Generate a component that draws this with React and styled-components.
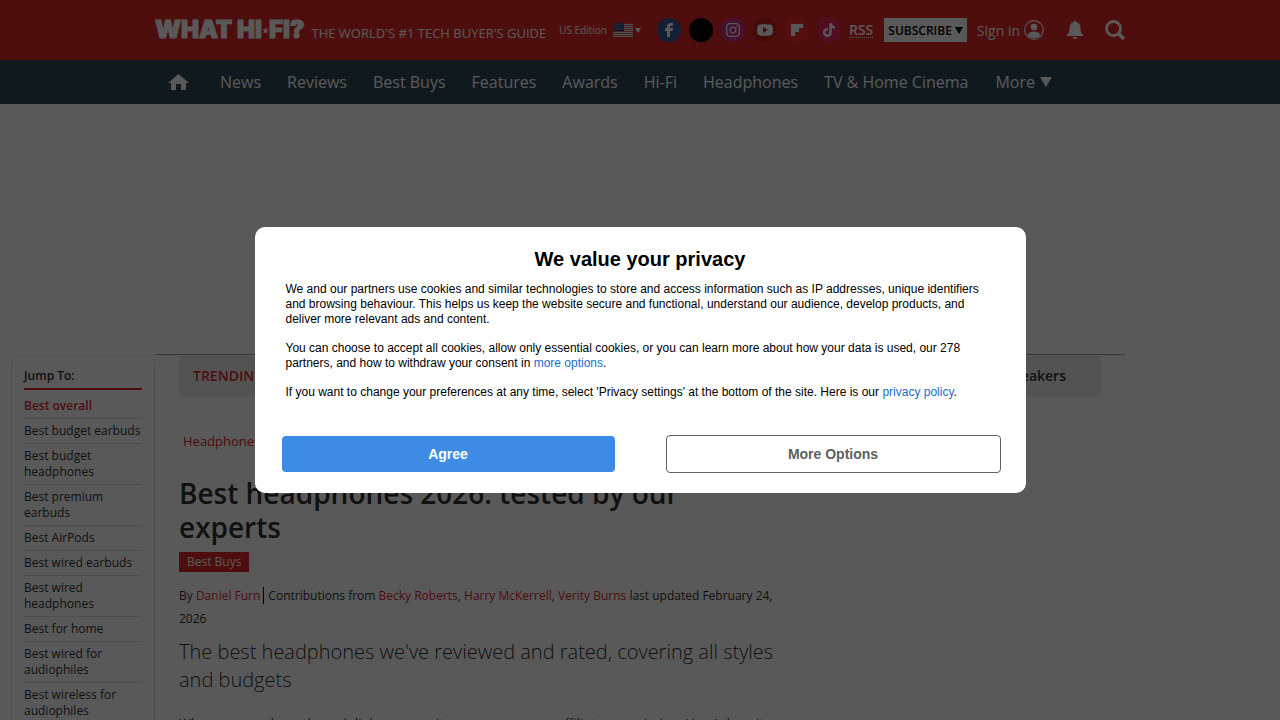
import React from "react";
import styled, { createGlobalStyle } from "styled-components";
import { FaInstagram, FaTiktok } from "react-icons/fa";

const SOCIALS = [
	{ name: "Facebook", color: "#3b5998", size: 14, Icon: FacebookMark },
	{ name: "X", color: "#000000", size: 15 },
	{ name: "Instagram", color: "#c8308c", size: 16, Icon: FaInstagram },
	{ name: "YouTube", color: "#c42222", size: 16, Icon: YoutubeMark },
	{ name: "Flipboard", color: "#f52c2c", size: 12, Icon: FlipboardMark },
	{ name: "TikTok", color: "#e62a64", size: 14, Icon: FaTiktok }
];

const NAV = [
	"News",
	"Reviews",
	"Best Buys",
	"Features",
	"Awards",
	"Hi-Fi",
	"Headphones",
	"TV & Home Cinema"
];

const JUMP_LINKS = [
	"Best overall",
	"Best budget earbuds",
	"Best budget headphones",
	"Best premium earbuds",
	"Best AirPods",
	"Best wired earbuds",
	"Best wired headphones",
	"Best for home",
	"Best wired for audiophiles",
	"Best wireless for audiophiles"
];

const TRENDING = ["Best turntables", "Best soundbars", "Best wireless speakers"];

function FacebookMark({ size }) {
	return (
		<svg width={size} height={size} viewBox="0 0 14 14">
			<path
				fill="currentColor"
				d="M5 14V8H3V5h2V3.500C5 1.200 6.300 0 8.400 0H11v2.800H9.300C8.400 2.800 8 3.200 8 4v1h3l-.4 3H8v6z"
			/>
		</svg>
	);
}

function YoutubeMark({ size }) {
	return (
		<svg width={size} height={size} viewBox="0 0 16 16">
			<path
				fill="currentColor"
				fillRule="evenodd"
				d="M3 2.500Q8 2 13 2.500Q15.500 2.700 15.700 5Q16 8 15.700 11Q15.500 13.300 13 13.500Q8 14 3 13.500Q.5 13.300.3 11Q0 8 .3 5Q.5 2.700 3 2.500zM6 5v6l5-3z"
			/>
		</svg>
	);
}

function FlipboardMark({ size }) {
	return (
		<svg width={size} height={size} viewBox="0 0 12 12">
			<path fill="currentColor" d="M0 0h12v4H8v4H4v4H0z" />
		</svg>
	);
}

const Flag = () => (
	<svg width="20" height="14" viewBox="0 0 20 14">
		<rect width="20" height="14" fill="#e8e8e8" />
		<path
			stroke="#d05060"
			d="M0 .5h20M0 2.500h20M0 4.500h20M0 6.500h20M0 8.500h20M0 10.500h20M0 12.500h20"
		/>
		<rect width="11" height="8" fill="#3a4f8c" />
		<path
			stroke="#8090c0"
			strokeDasharray="1 1"
			d="M1 1.500h9M2 3.500h8M1 5.500h9"
		/>
	</svg>
);

const Triangle = ({ width, height }) => (
	<svg width={width} height={height} viewBox="0 0 12 10" preserveAspectRatio="none">
		<path fill="currentColor" d="M0 0h12L6 10z" />
	</svg>
);

const App = () => (
	<>
		<GlobalStyle />
		<Header>
			<Container>
				<Logo href="#">
					WHAT HI
					<svg width="7" height="7" viewBox="0 0 24 24">
						<path
							fill="currentColor"
							d="M12 0l3 8.500h9l-7.200 5.500 2.700 9L12 17.600 4.500 23l2.700-9L0 8.500h9z"
						/>
					</svg>
					FI?
				</Logo>
				<Tagline>THE WORLD'S #1 TECH BUYER'S GUIDE</Tagline>
				<Tools>
					<Edition type="button">
						US Edition
						<Flag />
						<Triangle width={6} height={5} />
					</Edition>
					<Socials>
						{SOCIALS.map(({ name, color, size, Icon }) => (
							<SocialLink key={name} href="#" aria-label={name} $color={color}>
								{Icon && <Icon size={size} />}
							</SocialLink>
						))}
						<Rss href="#">RSS</Rss>
					</Socials>
					<Subscribe type="button">
						SUBSCRIBE
						<Triangle width={8} height={7} />
					</Subscribe>
					<SignIn href="#">
						Sign in
						<svg width="20" height="20" viewBox="0 0 20 20">
							<circle cx="10" cy="10" r="9.300" fill="none" stroke="currentColor" strokeWidth="1.200" />
							<circle cx="10" cy="7" r="3.300" fill="currentColor" />
							<path fill="currentColor" d="M3.800 15.500c.5-3 2.700-4 6.200-4s5.700 1 6.200 4c-3 3.600-9.400 3.600-12.400 0z" />
						</svg>
					</SignIn>
					<IconButton type="button" aria-label="Notifications">
						<svg width="16" height="18" viewBox="0 0 16 18">
							<path
								fill="currentColor"
								d="M8 0c-.9 0-1.400.6-1.500 1.300C3.800 2 2.600 4.200 2.600 7c0 4-1 5.600-2.600 6.800V15h16v-1.200C14.400 12.600 13.400 11 13.400 7c0-2.800-1.200-5-3.900-5.700C9.400.6 8.900 0 8 0zM5.500 16c.3 1.200 1.200 2 2.500 2s2.200-.8 2.500-2z"
							/>
						</svg>
					</IconButton>
					<IconButton type="button" aria-label="Search">
						<svg width="20" height="20" viewBox="0 0 20 20">
							<circle cx="8.500" cy="8.500" r="7" fill="none" stroke="currentColor" strokeWidth="2.800" />
							<path d="M13.500 13.500l5.500 5.500" stroke="currentColor" strokeWidth="3.600" />
						</svg>
					</IconButton>
				</Tools>
			</Container>
		</Header>
		<Nav>
			<Container>
				<HomeLink href="#" aria-label="Home">
					<svg width="21" height="16" viewBox="0 0 21 16">
						<path fill="currentColor" d="M10.500 0L21 9h-3v7h-5v-6H8v6H3V9H0z" />
					</svg>
				</HomeLink>
				{NAV.map(item => (
					<NavLink key={item} href="#">
						{item}
					</NavLink>
				))}
				<MoreButton type="button">
					More
					<Triangle width={12} height={10} />
				</MoreButton>
			</Container>
		</Nav>
		<Page>
			<Sidebar>
				<SidebarTitle>Jump To:</SidebarTitle>
				{JUMP_LINKS.map((item, i) => (
					<JumpLink key={item} href="#" $active={i === 0}>
						{item}
					</JumpLink>
				))}
			</Sidebar>
			<Main>
				<Trending>
					<strong>TRENDING</strong>
					{TRENDING.map(item => (
						<a key={item} href="#">
							{item}
						</a>
					))}
				</Trending>
				<Breadcrumb href="#">Headphones</Breadcrumb>
				<Article>
					<Title>Best headphones 2026: tested by our experts</Title>
					<Tag href="#">Best Buys</Tag>
					<Byline>
						By <a href="#">Daniel Furn</a>
						<Divider />
						Contributions from <a href="#">Becky Roberts</a>,{" "}
						<a href="#">Harry McKerrell</a>, <a href="#">Verity Burns</a> last
						updated February 24, 2026
					</Byline>
					<Standfirst>
						The best headphones we've reviewed and rated, covering all styles and
						budgets
					</Standfirst>
					<Affiliate>
						When you purchase through links on our site, we may earn an affiliate
						commission. Here’s how it works.
					</Affiliate>
				</Article>
			</Main>
		</Page>
		<Overlay>
			<Dialog role="dialog" aria-modal="true" aria-labelledby="privacy-title">
				<DialogTitle id="privacy-title">We value your privacy</DialogTitle>
				<DialogBody>
					<p>
						We and our partners use cookies and similar technologies to store and
						access information such as IP addresses, unique identifiers and
						browsing behaviour. This helps us keep the website secure and
						functional, understand our audience, develop products, and deliver
						more relevant ads and content.
					</p>
					<p>
						You can choose to accept all cookies, allow only essential cookies, or
						you can learn more about how your data is used, our 278 partners, and
						how to withdraw your consent in <a href="#">more options</a>.
					</p>
					<p>
						If you want to change your preferences at any time, select 'Privacy
						settings' at the bottom of the site. Here is our{" "}
						<a href="#">privacy policy</a>.
					</p>
				</DialogBody>
				<Actions>
					<AgreeButton type="button">Agree</AgreeButton>
					<OptionsButton type="button">More Options</OptionsButton>
				</Actions>
			</Dialog>
		</Overlay>
	</>
);

const GlobalStyle = createGlobalStyle`
	* {
		box-sizing: border-box;
	}
	html {
		overflow: hidden;
	}
	body {
		margin: 0;
		background: #fff;
		color: #333;
		font-family: "Open Sans", "Noto Sans", sans-serif;
	}
	a {
		text-decoration: none;
	}
	button {
		font-family: inherit;
		cursor: pointer;
	}
	svg {
		flex: none;
	}
`;

const Header = styled.header`
	background: #e12a2a;
	color: #fff;
`;

const Container = styled.div`
	display: flex;
	align-items: center;
	max-width: 970px;
	margin: 0 auto;
	white-space: nowrap;
`;

const Logo = styled.a`
	display: flex;
	align-items: center;
	color: inherit;
	font-family: Inter, sans-serif;
	font-size: 24px;
	font-weight: 900;
	line-height: 60px;
	-webkit-text-stroke: 1px currentColor;
`;

const Tagline = styled.span`
	margin-left: 7px;
	padding-top: 6px;
	font-size: 13px;
`;

const Tools = styled.div`
	display: flex;
	align-items: center;
	margin-left: auto;
`;

const PlainButton = styled.button`
	display: flex;
	align-items: center;
	padding: 0;
	border: none;
	background: none;
	color: inherit;
`;

const Edition = styled(PlainButton)`
	font-size: 10px;
	svg {
		margin-left: 6px;
	}
	svg + svg {
		margin-left: 2px;
	}
`;

const Socials = styled.div`
	display: flex;
	align-items: center;
	gap: 8px;
	margin: 0 11px 0 16px;
`;

const SocialLink = styled.a`
	display: flex;
	align-items: center;
	justify-content: center;
	width: 24px;
	height: 24px;
	border-radius: 50%;
	background: ${props => props.$color};
	color: #fff;
`;

const Rss = styled.a`
	border-bottom: 1px dotted #fff;
	color: inherit;
	font-size: 14px;
	font-weight: 600;
	line-height: 14px;
`;

const Subscribe = styled(PlainButton)`
	gap: 3px;
	height: 24px;
	padding: 0 4px;
	background: #fff;
	color: #000;
	font-size: 12px;
	font-weight: 600;
`;

const SignIn = styled.a`
	display: flex;
	align-items: center;
	gap: 4px;
	margin: 0 1px 0 10px;
	color: inherit;
	font-size: 14px;
`;

const IconButton = styled(PlainButton)`
	margin-left: 22px;
`;

const Nav = styled.nav`
	background: #304a58;
	color: #fff;
	line-height: 44px;
`;

const HomeLink = styled.a`
	display: flex;
	margin: 0 18px 0 13px;
	color: inherit;
`;

const NavLink = styled.a`
	padding: 0 13px;
	color: inherit;
	font-size: 16px;
`;

const MoreButton = styled(PlainButton)`
	gap: 5px;
	margin-left: 14px;
	font-size: 16px;
`;

const Page = styled.div`
	display: grid;
	grid-template-columns: minmax(155px, 1fr) minmax(0, 970px) minmax(0, 1fr);
	align-items: start;
	padding-top: 250px;
`;

const Sidebar = styled.aside`
	justify-self: end;
	width: 144px;
	margin-top: 1px;
	padding: 12px;
	border: 1px solid #e6e6e6;
	border-radius: 8px;
	font-size: 12px;
	line-height: 16px;
`;

const SidebarTitle = styled.div`
	padding-bottom: 4px;
	border-bottom: 2px solid #e12a2a;
	margin-bottom: 4px;
	font-weight: 600;
`;

const JumpLink = styled.a`
	display: block;
	padding: 4px 0;
	border-bottom: 1px solid #dcdcdc;
	color: ${props => (props.$active ? "#e12a2a" : "#333")};
	font-weight: ${props => (props.$active ? 600 : 400)};
`;

const Main = styled.main`
	padding: 0 24px;
	border-top: 1px solid #999;
`;

const Trending = styled.div`
	display: flex;
	align-items: center;
	justify-content: space-between;
	height: 41px;
	margin-top: 1px;
	padding: 0 35px 2px 14px;
	background: #eee;
	font-size: 14px;
	font-weight: 600;
	strong {
		color: #e12a2a;
		font-weight: 600;
	}
	a {
		color: inherit;
	}
`;

const Breadcrumb = styled.a`
	display: block;
	margin: 34px 0 25px 4px;
	color: #e12a2a;
	font-size: 13px;
	line-height: 20px;
`;

const Article = styled.article`
	max-width: 600px;
`;

const Title = styled.h1`
	margin: 0 0 8px;
	font-size: 28px;
	font-weight: 600;
	line-height: 34px;
`;

const Tag = styled.a`
	display: block;
	width: fit-content;
	padding: 0 8px;
	background: #e12a2a;
	color: #fff;
	font-size: 12px;
	line-height: 20px;
`;

const Byline = styled.p`
	margin: 12px 0 8px;
	font-size: 12px;
	line-height: 23px;
	a {
		color: #e12a2a;
	}
`;

const Divider = styled.span`
	margin: 0 4px 0 3px;
	border-left: 1px solid #000;
`;

const Standfirst = styled.h2`
	margin: 0 0 19px;
	font-size: 20px;
	font-weight: 300;
	line-height: 28px;
`;

const Affiliate = styled.p`
	margin: 0;
	font-size: 13px;
	line-height: 20px;
`;

const Overlay = styled.div`
	position: fixed;
	inset: 0;
	display: flex;
	align-items: center;
	justify-content: center;
	background: rgba(0, 0, 0, 0.65);
`;

const Dialog = styled.section`
	width: 100%;
	max-width: 771px;
	padding: 20px 25px;
	border-radius: 10px;
	background: #fff;
	color: #000;
	font-family: "Liberation Sans", Arial, sans-serif;
`;

const DialogTitle = styled.h2`
	margin: 0 0 11px;
	font-size: 20px;
	line-height: 24px;
	text-align: center;
`;

const DialogBody = styled.div`
	padding: 0 16px 0 6px;
	font-size: 12px;
	line-height: 15px;
	p {
		margin: 0 0 14px;
	}
	a {
		color: #1a6dcc;
	}
`;

const Actions = styled.div`
	display: flex;
	align-items: center;
	gap: 51px;
	margin-top: 35px;
	padding-left: 2px;
`;

const DialogButton = styled.button`
	flex: 1;
	border-radius: 4px;
	font-size: 14px;
	font-weight: 700;
`;

const AgreeButton = styled(DialogButton)`
	height: 36px;
	border: none;
	background: #3d8be4;
	color: #fff;
`;

const OptionsButton = styled(DialogButton)`
	height: 38px;
	border: 1px solid #5f6062;
	background: #fff;
	color: #5f6062;
`;

export default App;
